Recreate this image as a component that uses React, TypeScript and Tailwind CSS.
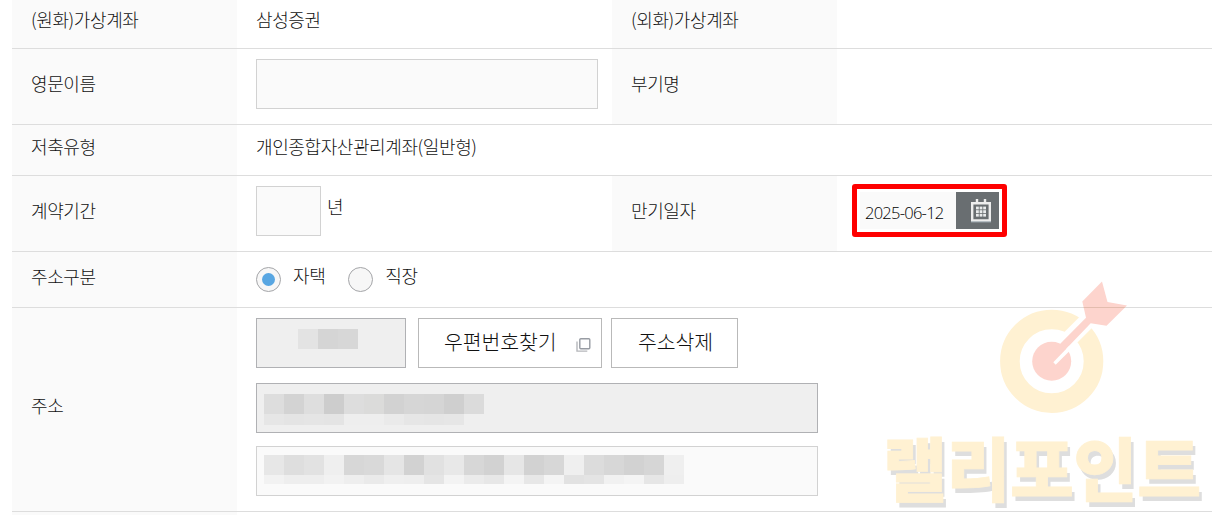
import type { ReactNode } from 'react'

const HEAD = ['#e3e3e3', '#d5d5d5', '#d7d7d7']

const LINE_1 = ['#dddddd', '#d3d3d3', '#dedede', '#cdcdcd', '#dddddd', '#dbdbda', '#d2d2d2', '#d6d6d6', '#d5d5d5', '#cfcfcf', '#dbdbdb']
const LINE_1_LOW = ['#e6e6e6', '#e4e4e4', '#e5e5e5', '#e4e4e4', '#eeeeee', '#eeeeee', '#eaeaea', '#e6e6e6', '#e5e5e5', '#e6e6e6']

const LINE_2 = [
  '#e7e7e7', '#dedede', '#e2e2e2', '#efefef', '#d7d7d7', '#d9d9d9', '#e5e5e5', '#d2d2d2', '#e1e1e1', '#e8e8e8', '#d7d7d7',
  '#d2d2d2', '#e6e6e6', '#d2d2d2', '#d7d7d7', '#efefef', '#dcdcdc', '#d7d7d7', '#d2d2d2', '#d6d6d6', '#efefef',
]
const LINE_2_LOW = [
  '#f2f2f2', '#eeeeee', '#eeeeee', '#f2f2f2', '#eeeeee', '#eaeaea', '#efefef', '#eeeeee', '#e5e5e5', '#f3f3f3', '#ebebeb',
  '#e7e7e7', '#f4f4f4', '#e7e7e7', '#f4f4f4', '#e2e2e2', '#e4e4e4', '#f1f1f1', '#f4f4f4', '#e6e6e6', '#eeeeee',
]

/** One strip of 20px masking tiles. */
function Mosaic({ tiles, className }: { tiles: string[]; className: string }) {
  return (
    <div className={`flex ${className}`}>
      {tiles.map((color, i) => (
        <span key={i} className="w-5" style={{ backgroundColor: color }} />
      ))}
    </div>
  )
}

function Label({ children, className }: { children: ReactNode; className: string }) {
  return <div className={`w-[225px] shrink-0 bg-[#fafafa] pl-[19px] ${className}`}>{children}</div>
}

function Row({ children, className }: { children: ReactNode; className: string }) {
  return <div className={`flex border-b border-[#dddddd] ${className}`}>{children}</div>
}

function Radio({ checked = false }: { checked?: boolean }) {
  return (
    <span className="mt-[15px] flex size-[25px] items-center justify-center rounded-full border-[1.5px] border-[#a4a5a8] bg-[#f7f7f7]">
      {checked && <span className="size-[13px] rounded-full bg-[#58a6e2]" />}
    </span>
  )
}

function CalendarIcon() {
  return (
    <svg width="20" height="24" viewBox="0 0 20 24" fill="none">
      <path d="M1.2 4.2h17.6v17.2H1.2z" stroke="#ededed" strokeWidth="2.4" />
      <path d="M0 22.8h20" stroke="#b9c4cb" />
      <path d="M6 0v4M14 0v4" stroke="#ededed" strokeWidth="2.4" />
      {[7.6, 11.2, 14.8].map((y) =>
        [5, 8.6, 12.2].map((x) => <rect key={`${x}-${y}`} x={x} y={y} width="2.8" height="2.8" fill="#e9ebec" />),
      )}
    </svg>
  )
}

function Watermark() {
  return (
    <div className="pointer-events-none absolute top-[281px] left-[880px] w-[334px]">
      <svg className="ml-[119px]" width="130" height="134" viewBox="0 0 130 134">
        <circle cx="52.7" cy="80.3" r="41.8" fill="none" stroke="#fff1d2" strokeWidth="19.6" />
        {/* gap in the ring where the arrow passes */}
        <path d="m64 64.1 29-29" stroke="#fff" strokeWidth="16.7" />
        <circle cx="52.7" cy="80.3" r="19.5" fill="#fdd4cd" />
        <path d="M103 .5 83.3 20.5 87 36.7 61 63 54.3 81.3 91.7 42.2 107.5 44.8 128 24.5 108.5 21z" fill="#fdd4cd" />
        <path d="m54.3 81.3 2.4 2.4 15.8-15.8-2.7-2.7z" fill="#fff" />
        <path d="M84.6 26.5h41.2" stroke="#e3bcae" />
      </svg>
      <div className="mt-[6px] ml-[3px] h-[90px] text-[69.5px] leading-[90px] font-black tracking-[-0.4px] whitespace-nowrap text-[#fff1d2] [-webkit-text-stroke:0.8px_#fff1d2] [text-shadow:3px_5px_0_#dedede]">
        랠리포인트
      </div>
    </div>
  )
}

export default function App() {
  return (
    <div className="relative h-[515px] w-[1214px] overflow-hidden bg-white pl-3 font-['Noto_Sans_CJK_KR',sans-serif] text-[18px] leading-6 font-light tracking-[-0.4px] text-[#111]">
      <div className="w-[1200px]">
        <Row className="h-[49px]">
          <Label className="pt-[7px]">(원화)가상계좌</Label>
          <div className="w-[375px] pt-[7px] pl-[19px]">삼성증권</div>
          <Label className="pt-[7px]">(외화)가상계좌</Label>
        </Row>

        <Row className="h-[76px]">
          <Label className="pt-[22px]">영문이름</Label>
          <div className="w-[375px] pt-[10px] pl-[19px]">
            <div className="h-[50px] w-[342px] border border-[#d2d2d2] bg-[#fafafa]" />
          </div>
          <Label className="pt-[22px]">부기명</Label>
        </Row>

        <Row className="h-[51px]">
          <Label className="pt-[9px]">저축유형</Label>
          <div className="pt-[9px] pl-[19px]">개인종합자산관리계좌(일반형)</div>
        </Row>

        <Row className="h-[76px]">
          <Label className="pt-[22px]">계약기간</Label>
          <div className="flex w-[375px] pt-[10px] pl-[19px]">
            <div className="h-[50px] w-[65px] border border-[#d2d2d2] bg-[#fafafa]" />
            <span className="mt-2 ml-1.5">년</span>
          </div>
          <Label className="pt-[22px]">만기일자</Label>
          <div className="pt-2 pl-[15px]">
            <div className="flex h-[53px] w-[155px] rounded-[3px] border-[5px] border-[#fe0000] p-[3px]">
              <div className="flex h-[37px] flex-1 bg-[#fafafa]">
                <span className="w-[96px] pt-[9px] pl-[5px] font-['Open_Sans',sans-serif] text-[16.5px] tracking-[-0.75px] text-black">
                  2025-06-12
                </span>
                <span className="flex flex-1 items-start bg-[#696e71] pt-[7px] pl-[15px]">
                  <CalendarIcon />
                </span>
              </div>
            </div>
          </div>
        </Row>

        <Row className="h-[56px]">
          <Label className="pt-3">주소구분</Label>
          <div className="flex pl-[19px]">
            <Radio checked />
            <span className="mt-[11px] ml-3">자택</span>
            <span className="ml-[23px]">
              <Radio />
            </span>
            <span className="mt-[11px] ml-3">직장</span>
          </div>
        </Row>

        <Row className="h-[204px]">
          <Label className="pt-[85px]">주소</Label>
          <div className="pt-[10px] pl-[19px]">
            <div className="flex text-[20.5px] leading-[44px] tracking-[-0.1px]">
              <div className="h-[50px] w-[150px] border border-[#b0b1b4] bg-[#efefef] pt-[10px] pl-[41px]">
                <Mosaic tiles={HEAD} className="h-5" />
              </div>
              <button className="ml-3 flex h-[50px] w-[184px] border border-[#b9b9b9] pl-[25px]">
                우편번호찾기
                <svg className="mt-[18px] ml-[18px]" width="16" height="16" viewBox="0 0 16 16" fill="none">
                  <rect x="4.8" y="1.7" width="10" height="10" rx="1" stroke="#989ca3" strokeWidth="1.4" />
                  <path d="M2 4.5v9.6h10.3" stroke="#b5b7bb" strokeWidth="1.4" />
                </svg>
              </button>
              <button className="ml-[9px] flex h-[50px] w-[127px] border border-[#b9b9b9] pl-[26px]">주소삭제</button>
            </div>
            <div className="mt-[15px] h-[50px] w-[562px] border border-[#b0b1b4] bg-[#efefef] pt-[10px] pl-[7px]">
              <Mosaic tiles={LINE_1} className="h-5" />
              <Mosaic tiles={LINE_1_LOW} className="h-[11px]" />
            </div>
            <div className="mt-[13px] h-[50px] w-[562px] border border-[#d2d2d2] bg-[#fafafa] pt-2 pl-[7px]">
              <Mosaic tiles={LINE_2} className="h-5" />
              <Mosaic tiles={LINE_2_LOW} className="h-[9px]" />
            </div>
          </div>
        </Row>

        <div className="h-[3px] w-[225px] bg-[#fafafa]" />
      </div>

      <Watermark />
    </div>
  )
}
